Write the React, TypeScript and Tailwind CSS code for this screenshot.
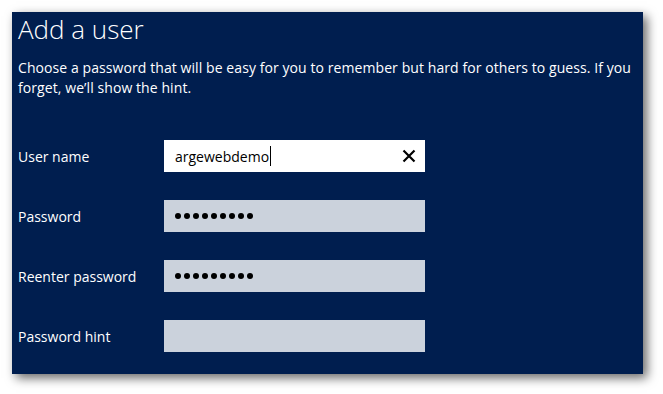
import React from "react";

const font = { fontFamily: '"Segoe UI", "Open Sans", "Noto Sans", sans-serif' };

const Dots = ({ count }: { count: number }) => (
  <div className="flex items-center gap-[3px]">
    {Array.from({ length: count }).map((_, i) => (
      <span key={i} className="block h-[6px] w-[6px] rounded-full bg-black" />
    ))}
  </div>
);

const Field = ({ label, children, active }: { label: string; children?: React.ReactNode; active?: boolean }) => (
  <div className="flex h-[32px] items-center">
    <div className="w-[146px] text-[14px] text-white">{label}</div>
    <div
      className={
        "flex h-[32px] w-[261px] items-center pl-[11px] pr-[9px] " +
        (active ? "bg-white" : "bg-[#cbd2dc]")
      }
    >
      {children}
    </div>
  </div>
);

export default function App() {
  return (
    <div className="h-[394px] w-[663px] bg-white pl-[12px] pt-[12px]" style={font}>
      <div className="h-[362px] w-[631px] bg-[#001e4f] pl-[6px] pr-[8px] shadow-[4px_4px_10px_rgba(0,0,0,0.6)]">
        <h1 className="text-[26px] font-light leading-[34px] text-white">Add a user</h1>
        <p className="mt-[12px] whitespace-nowrap text-[14px] tracking-[0.08px] leading-[20px] text-white">
          Choose a password that will be easy for you to remember but hard for others to guess. If you
          <br />
          forget, we’ll show the hint.
        </p>
        <div className="mt-[42px] flex flex-col gap-[28px]">
          <Field label="User name" active>
            <span className="text-[14px] text-black">argewebdemo</span>
            <span className="ml-[1px] h-[20px] w-[1px] bg-black" />
            <svg className="ml-auto" width="14" height="14" viewBox="0 0 14 14">
              <path d="M1.5 1.5 L12.5 12.5 M12.5 1.5 L1.5 12.5" stroke="#000" strokeWidth="2.2" />
            </svg>
          </Field>
          <Field label="Password">
            <Dots count={9} />
          </Field>
          <Field label="Reenter password">
            <Dots count={9} />
          </Field>
          <Field label="Password hint" />
        </div>
      </div>
    </div>
  );
}
